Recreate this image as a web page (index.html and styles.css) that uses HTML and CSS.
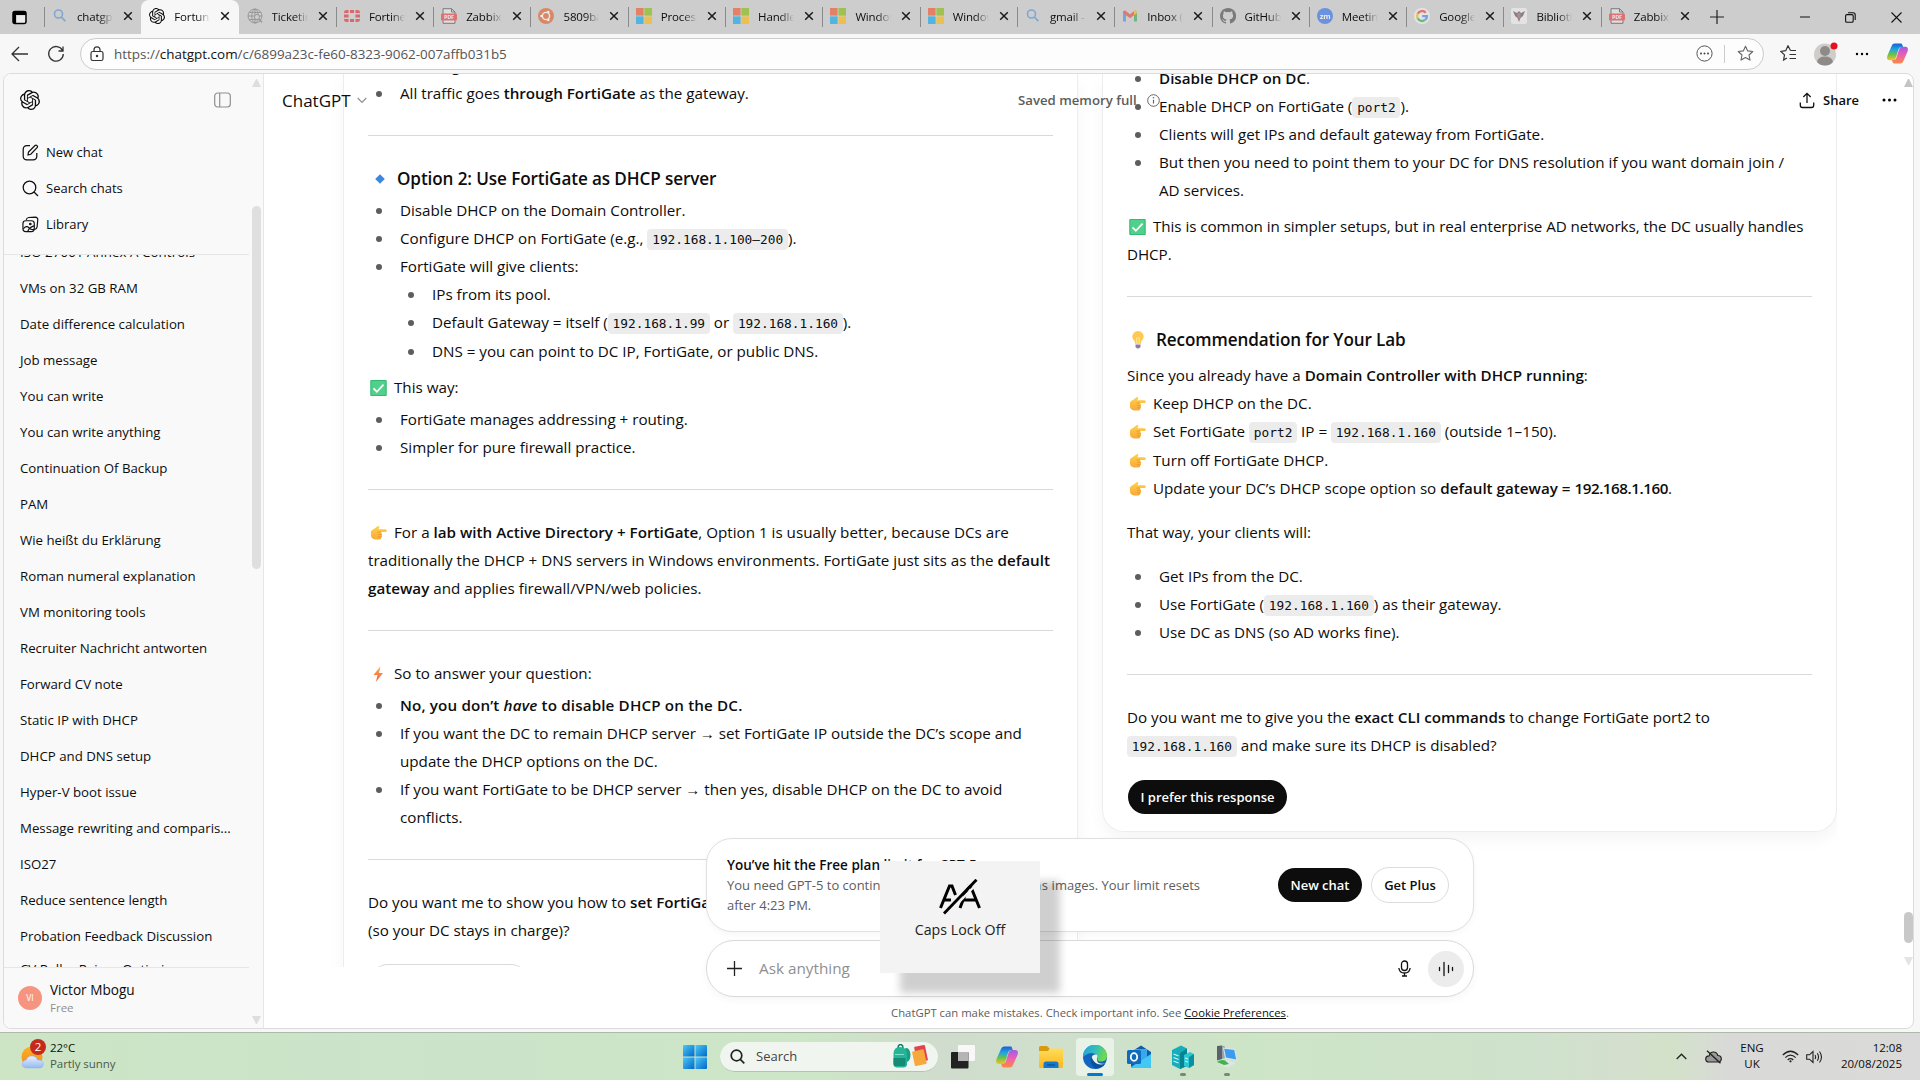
FILE: index.html
```html
<!DOCTYPE html>
<html lang="en">
<head>
<meta charset="utf-8">
<title>ChatGPT</title>
<link rel="stylesheet" href="styles.css">
</head>
<body>
<svg class="defs" width="0" height="0">
  <defs>
    <linearGradient id="gHand" x1="0" y1="0" x2="0" y2="1"><stop offset="0" stop-color="#ffd24a"/><stop offset="1" stop-color="#f9a83a"/></linearGradient>
    <linearGradient id="gBolt" x1="0" y1="0" x2="0" y2="1"><stop offset="0" stop-color="#ffb347"/><stop offset="1" stop-color="#f4553f"/></linearGradient>
    <linearGradient id="gCopA" x1="0" y1="0" x2="0" y2="1"><stop offset="0" stop-color="#1b5fd0"/><stop offset=".35" stop-color="#1ba5e6"/><stop offset=".65" stop-color="#6cc04a"/><stop offset="1" stop-color="#f3c623"/></linearGradient>
    <linearGradient id="gCopB" x1="0" y1="0" x2="0" y2="1"><stop offset="0" stop-color="#a05be8"/><stop offset=".5" stop-color="#ef5fb0"/><stop offset="1" stop-color="#fb8b3c"/></linearGradient>
    <linearGradient id="gWin" x1="0" y1="0" x2="1" y2="1"><stop offset="0" stop-color="#4cc9f7"/><stop offset="1" stop-color="#0067c8"/></linearGradient>
    <linearGradient id="gFold" x1="0" y1="0" x2="0" y2="1"><stop offset="0" stop-color="#ffdc59"/><stop offset="1" stop-color="#fbb81f"/></linearGradient>
    <linearGradient id="gEdge" x1="0" y1="0" x2="1" y2=".3"><stop offset="0" stop-color="#1f9fe4"/><stop offset=".6" stop-color="#35c1b5"/><stop offset="1" stop-color="#6fd94b"/></linearGradient>
    <linearGradient id="gSun" x1="0" y1="0" x2="0" y2="1"><stop offset="0" stop-color="#fdb022"/><stop offset="1" stop-color="#f08a1d"/></linearGradient>
    <linearGradient id="gCloud" x1="0" y1="0" x2="0" y2="1"><stop offset="0" stop-color="#e9f0fb"/><stop offset="1" stop-color="#95b9f3"/></linearGradient>
    <symbol id="x" viewBox="0 0 10 10"><path d="M1.2 1.2l7.6 7.6M8.8 1.2L1.2 8.8" stroke="#1a1a1a" stroke-width="1.5" fill="none"/></symbol>
    <symbol id="knot" viewBox="0 0 24 24"><path fill="currentColor" d="M22.28 9.82a5.98 5.98 0 0 0-.52-4.91 6.05 6.05 0 0 0-6.51-2.9A6.07 6.07 0 0 0 4.98 4.18a5.98 5.98 0 0 0-4 2.9 6.05 6.05 0 0 0 .74 7.1 5.98 5.98 0 0 0 .51 4.91 6.05 6.05 0 0 0 6.51 2.9A5.98 5.98 0 0 0 13.26 24a6.06 6.06 0 0 0 5.77-4.21 5.99 5.99 0 0 0 4-2.9 6.06 6.06 0 0 0-.75-7.07zm-9.02 12.61a4.48 4.48 0 0 1-2.88-1.04l.14-.08 4.78-2.76a.79.79 0 0 0 .39-.68v-6.74l2.02 1.17a.07.07 0 0 1 .04.05v5.58a4.5 4.5 0 0 1-4.49 4.5zM3.6 18.3a4.47 4.47 0 0 1-.54-3.01l.14.09 4.78 2.76a.77.77 0 0 0 .78 0l5.84-3.37v2.33a.08.08 0 0 1-.03.06L9.74 19.95a4.5 4.5 0 0 1-6.14-1.65zM2.34 7.9a4.49 4.49 0 0 1 2.37-1.98v5.68a.77.77 0 0 0 .39.68l5.81 3.35-2.02 1.17a.08.08 0 0 1-.07 0l-4.83-2.79A4.5 4.5 0 0 1 2.34 7.87zm16.6 3.86L13.1 8.36l2.02-1.16a.08.08 0 0 1 .07 0l4.83 2.79a4.49 4.49 0 0 1-.68 8.1v-5.68a.79.79 0 0 0-.4-.66zm2.01-3.02l-.14-.09-4.77-2.78a.78.78 0 0 0-.79 0L9.41 9.23V6.9a.07.07 0 0 1 .03-.06l4.83-2.79a4.5 4.5 0 0 1 6.68 4.66zM8.31 12.86l-2.02-1.16a.08.08 0 0 1-.04-.06V6.07a4.5 4.5 0 0 1 7.38-3.45l-.14.08-4.78 2.76a.79.79 0 0 0-.39.68zm1.1-2.36L12 9l2.6 1.5v3L12 15l-2.6-1.5z"/></symbol>
    <symbol id="mag" viewBox="0 0 16 16"><circle cx="6.5" cy="6" r="4" fill="none" stroke="#4a90d0" stroke-width="1.6"/><path d="M9.3 9l4 4.2" stroke="#4a90d0" stroke-width="1.8"/></symbol>
    <symbol id="globe" viewBox="0 0 16 16"><g fill="none" stroke="#777"><circle cx="8" cy="8" r="7"/><ellipse cx="8" cy="8" rx="3.2" ry="7"/><path d="M1 8h14M2 4.5h12M2 11.5h12M8 1v14"/></g><circle cx="10" cy="9" r="2.6" fill="#cdcdcd" stroke="#777"/><path d="M12 11l3 3.6" stroke="#777" stroke-width="1.5"/></symbol>
    <symbol id="forti" viewBox="0 0 16 16"><path fill="#e5252a" d="M6 2h4v3H6zM6 11h4v3H6zM0 6.5h4.5v3H0zM11.5 6.5H16v3h-4.500zM4.500 2v3H0q0-3 2.500-3zM11.500 2v3H16q0-3-2.500-3zM4.500 14v-3H0q0 3 2.500 3zM11.500 14v-3H16q0 3-2.500 3z"/></symbol>
    <symbol id="pdf" viewBox="0 0 16 16"><path d="M2 .7h8.500L14 4v11.300H2z" fill="#e9e9e9" stroke="#444"/><path d="M10.500.7V4H14" fill="none" stroke="#444"/><rect x="0" y="5.500" width="16" height="7" rx="1" fill="#e5393c"/><text x="8" y="11" font-family="Open Sans" font-weight="700" font-size="5.400" fill="#fff" text-anchor="middle">PDF</text></symbol>
    <symbol id="ubuntu" viewBox="0 0 16 16"><circle cx="8" cy="8" r="8" fill="#e25b25"/><circle cx="8" cy="8" r="3.600" fill="none" stroke="#fff" stroke-width="1.400"/><circle cx="3.500" cy="8" r="1.300" fill="#fff"/><circle cx="10.300" cy="4" r="1.300" fill="#fff"/><circle cx="10.300" cy="12" r="1.300" fill="#fff"/></symbol>
    <symbol id="ms" viewBox="0 0 16 16"><path fill="#f25022" d="M0 0h7.600v7.600H0z"/><path fill="#7fba00" d="M8.400 0H16v7.600H8.400z"/><path fill="#00a4ef" d="M0 8.400h7.600V16H0z"/><path fill="#ffb900" d="M8.400 8.400H16V16H8.400z"/></symbol>
    <symbol id="gmail" viewBox="0 0 16 16"><path fill="#4285f4" d="M1 4v9.500h3V7z"/><path fill="#34a853" d="M15 4v9.500h-3V7z"/><path fill="#ea4335" d="M1 3.500q1-1.500 2.500-.8L8 6.200l4.500-3.500q1.500-.7 2.500.8V5L8 10.300 1 5z"/><path fill="#fbbc04" d="M12 3v4.300L15 5V3.500q-1-1.500-3-.5z"/></symbol>
    <symbol id="github" viewBox="0 0 16 16"><path fill="#444" d="M8 0C3.580 0 0 3.580 0 8c0 3.540 2.290 6.530 5.470 7.590.4.070.55-.17.55-.38v-1.340c-2.230.480-2.700-1.070-2.700-1.070-.360-.920-.890-1.170-.890-1.170-.730-.500.050-.490.050-.490.800.060 1.230.830 1.230.830.720 1.220 1.870.870 2.330.660.070-.520.280-.870.510-1.070-1.780-.200-3.640-.890-3.640-3.950 0-.870.310-1.590.820-2.150-.080-.200-.360-1.020.080-2.120 0 0 .670-.210 2.200.820a7.600 7.600 0 0 1 4 0c1.530-1.040 2.200-.820 2.200-.820.440 1.100.160 1.920.080 2.120.510.560.820 1.270.820 2.150 0 3.070-1.870 3.750-3.650 3.950.290.250.540.730.540 1.480v2.200c0 .210.150.460.550.380A8 8 0 0 0 8 0z"/></symbol>
    <symbol id="zoomf" viewBox="0 0 16 16"><circle cx="8" cy="8" r="8" fill="#2b6bea"/><text x="8" y="10.600" font-family="Open Sans" font-weight="700" font-size="7.500" fill="#fff" text-anchor="middle">zm</text></symbol>
    <symbol id="google" viewBox="0 0 16 16"><circle cx="8" cy="8" r="8" fill="#f4f4f4"/><g fill="none" stroke-width="2.300"><path d="M11.800 4.700A5 5 0 0 0 3.600 5.800" stroke="#ea4335"/><path d="M3.600 5.800a5 5 0 0 0 0 4.500" stroke="#fbbc04"/><path d="M3.600 10.300a5 5 0 0 0 7.500 1.600" stroke="#34a853"/><path d="M11.100 11.900A5 5 0 0 0 13 8.100H8.200" stroke="#4285f4"/></g></symbol>
    <symbol id="biblio" viewBox="0 0 16 16"><rect width="16" height="16" rx="2" fill="#f2f2f2"/><path d="M2 3l4 2 2-2 2 2 4-2-2 5-2.500 2L8 14l-1.500-4L4 8z" fill="#555"/><path d="M6.500 5h3v4L8 11 6.500 9z" fill="#b55"/></symbol>
    <symbol id="hand" viewBox="0 0 18 16"><path fill="url(#gHand)" d="M1 6.500q1-2 3.500-3L8 .8q1.800-.6 1.900.9L9 4h7.300q1.500.2 1.500 1.500T16.300 7H11.500q1.200.6.900 1.900 1 .9.200 2.100.600 1.300-.6 2 0 1.800-2 2H5.500Q1.500 14.500 1 11z"/><path d="M8 7h3.500M8.500 9.500h3.500M8.500 12h3" stroke="#e08a20" stroke-width=".7" fill="none"/></symbol>
    <symbol id="check" viewBox="0 0 16 16"><rect width="16" height="16" rx="1" fill="#4fd18b"/><path d="M.4.500h15.200v15H.4z" fill="none" stroke="#2fb56f" stroke-width=".9"/><path d="M3 8.300l3.400 3.500L13 4.700" fill="none" stroke="#fff" stroke-width="1.700"/></symbol>
    <symbol id="cop" viewBox="0 0 24 24"><path fill="url(#gCopA)" d="M15.500 1.500H9Q6.800 1.500 6 4L1.500 14Q0 19 4 19h3.500q2 0 2.800-2.500l3-9.500q.7-1.700 2.500-1.700h2L17 2.800q-.4-1.300-1.500-1.300z"/><path fill="url(#gCopB)" d="M8.500 22.500H15q2.200 0 3-2.500l4.500-10Q24 5 20 5h-3.500q-2 0-2.800 2.500l-3 9.500Q10 18.700 8.200 18.700h-2L7 21.200q.4 1.300 1.500 1.300z"/></symbol>
  </defs>
</svg>

<div class="tabstrip">
  <div class="tabmenu"><svg width="15" height="15" viewBox="0 0 15 15"><rect x="1" y="1.500" width="13" height="12" rx="2" fill="none" stroke="#000" stroke-width="1.500"/><path d="M1 2.500q0-1.500 2-1.500h9q2 0 2 1.500V5H1zM1 5h3v8.500H3q-2 0-2-2z" fill="#000"/><path d="M5 5.500h8v7H5z" fill="#fff" opacity=".6"/></svg></div>
  <div class="tab"><svg class="fav"><use href="#mag"/></svg><span>chatgpt</span><svg class="close"><use href="#x"/></svg></div>
  <div class="tab active"><svg class="fav"><use href="#knot"/></svg><span>Fortune</span><svg class="close"><use href="#x"/></svg></div>
  <div class="tab"><svg class="fav"><use href="#globe"/></svg><span>Ticketing</span><svg class="close"><use href="#x"/></svg></div>
  <div class="tab"><svg class="fav"><use href="#forti"/></svg><span>Fortinet</span><svg class="close"><use href="#x"/></svg></div>
  <div class="tab"><svg class="fav"><use href="#pdf"/></svg><span>Zabbix_</span><svg class="close"><use href="#x"/></svg></div>
  <div class="tab"><svg class="fav"><use href="#ubuntu"/></svg><span>5809ba</span><svg class="close"><use href="#x"/></svg></div>
  <div class="tab"><svg class="fav"><use href="#ms"/></svg><span>Process</span><svg class="close"><use href="#x"/></svg></div>
  <div class="tab"><svg class="fav"><use href="#ms"/></svg><span>Handle</span><svg class="close"><use href="#x"/></svg></div>
  <div class="tab"><svg class="fav"><use href="#ms"/></svg><span>Window</span><svg class="close"><use href="#x"/></svg></div>
  <div class="tab"><svg class="fav"><use href="#ms"/></svg><span>Window</span><svg class="close"><use href="#x"/></svg></div>
  <div class="tab"><svg class="fav"><use href="#mag"/></svg><span>gmail -</span><svg class="close"><use href="#x"/></svg></div>
  <div class="tab"><svg class="fav"><use href="#gmail"/></svg><span>Inbox (</span><svg class="close"><use href="#x"/></svg></div>
  <div class="tab"><svg class="fav"><use href="#github"/></svg><span>GitHub</span><svg class="close"><use href="#x"/></svg></div>
  <div class="tab"><svg class="fav"><use href="#zoomf"/></svg><span>Meeting</span><svg class="close"><use href="#x"/></svg></div>
  <div class="tab"><svg class="fav"><use href="#google"/></svg><span>Google</span><svg class="close"><use href="#x"/></svg></div>
  <div class="tab"><svg class="fav"><use href="#biblio"/></svg><span>Biblioth</span><svg class="close"><use href="#x"/></svg></div>
  <div class="tab"><svg class="fav"><use href="#pdf"/></svg><span>Zabbix_</span><svg class="close"><use href="#x"/></svg></div>
  <svg class="plus" width="14" height="14" viewBox="0 0 14 14"><path d="M7 0v14M0 7h14" stroke="#222" stroke-width="1.200"/></svg>
  <div class="winbtns">
    <svg width="10" height="10" viewBox="0 0 10 10"><path d="M0 5h10" stroke="#111"/></svg>
    <svg width="11" height="11" viewBox="0 0 11 11" fill="none" stroke="#111" stroke-width="1.100"><rect x=".6" y="2.600" width="7.600" height="7.600" rx="1.300"/><path d="M3 .7h5q2.200 0 2.200 2.200V8"/></svg>
    <svg width="11" height="11" viewBox="0 0 11 11"><path d="M.5.500l10 10M10.500.500l-10 10" stroke="#111" stroke-width="1.100"/></svg>
  </div>
</div>

<div class="toolbar">
  <svg class="back" width="18" height="16" viewBox="0 0 18 16"><path d="M8 1L1 8l7 7M1 8h16" fill="none" stroke="#333" stroke-width="1.300"/></svg>
  <svg class="reload" width="18" height="18" viewBox="0 0 18 18"><path d="M15.500 5.500A7.300 7.300 0 1 0 16.300 9M16 1.500v4.500h-4.500" fill="none" stroke="#333" stroke-width="1.300"/></svg>
  <div class="address">
    <svg width="14" height="16" viewBox="0 0 14 16"><rect x="1" y="5.500" width="12" height="9" rx="1.800" fill="none" stroke="#333" stroke-width="1.200"/><path d="M4 5.500V3.800a3 3 0 0 1 6 0v1.700" fill="none" stroke="#333" stroke-width="1.200"/><circle cx="7" cy="10" r="1.200" fill="#333"/></svg>
    <span class="url">https://<b>chatgpt.com</b>/c/6899a23c-fe60-8323-9062-007affb031b5</span>
    <svg width="17" height="17" viewBox="0 0 17 17"><circle cx="8.500" cy="8.500" r="7.600" fill="none" stroke="#555"/><g fill="#444"><circle cx="5" cy="8.500" r="1"/><circle cx="8.500" cy="8.500" r="1"/><circle cx="12" cy="8.500" r="1"/></g></svg>
    <i class="adiv"></i>
    <svg width="17" height="17" viewBox="0 0 17 17"><path d="M8.500 1.200l2.200 4.700 5.100.6-3.800 3.500 1 5.100-4.500-2.500L4 15.100 5 10 1.200 6.500l5.100-.6z" fill="none" stroke="#666" stroke-width="1.100" stroke-linejoin="round"/></svg>
  </div>
  <div class="tools">
    <svg width="17" height="17" viewBox="0 0 17 17" fill="none" stroke="#333" stroke-width="1.200"><path d="M10.500 5.500L8 .8 5.700 5.700.8 6.400l3.700 3.500-.9 5.100 3.300-1.900M10.500 5.500H16M9.500 9.500H16M9.500 13.500H16"/></svg>
    <svg width="24" height="24" viewBox="0 0 24 24"><circle cx="11" cy="12.500" r="11" fill="#cfccc9"/><circle cx="11" cy="9" r="5" fill="#8e8a87"/><path d="M3 20q1-5.500 8-5.500t8 5.500q-3 3.500-8 3.500T3 20z" fill="#8e8a87"/><circle cx="20" cy="4" r="3.500" fill="#e8101c"/></svg>
    <svg width="14" height="4" viewBox="0 0 14 4"><circle cx="2" cy="2" r="1.200"/><circle cx="7" cy="2" r="1.200"/><circle cx="12" cy="2" r="1.200"/></svg>
    <svg width="23" height="23"><use href="#cop"/></svg>
  </div>
</div>

<div class="window">
  <aside class="sidebar">
    <div class="sidemain">
      <div class="sidehead"><svg class="logo" width="20" height="20"><use href="#knot"/></svg><svg width="17" height="16" viewBox="0 0 17 16"><rect x=".7" y="1" width="15.600" height="14" rx="3" fill="none" stroke="#8f8f8f" stroke-width="1.200"/><path d="M5.700 1v14" stroke="#8f8f8f" stroke-width="1.200"/></svg></div>
      <nav>
        <div><svg width="17" height="17" viewBox="0 0 17 17" fill="none" stroke="#111" stroke-width="1.250"><path d="M8 1.700H5Q1.200 1.700 1.200 5.500V12q0 3.800 3.800 3.800h6q3.800 0 3.800-3.800V9"/><path d="M6 11l.5-3L13 1.500q1-.8 2 .1t.1 2L8.800 10.300z"/></svg>New chat</div>
        <div><svg width="17" height="17" viewBox="0 0 17 17" fill="none" stroke="#111" stroke-width="1.300"><circle cx="7.500" cy="7.500" r="6.300"/><path d="M12 12l4 4"/></svg>Search chats</div>
        <div><svg width="17" height="17" viewBox="0 0 18 17" fill="none" stroke="#111" stroke-width="1.250"><path d="M4.500 3.500q.5-2 2.500-2.400l7-.4q2.700.2 2.700 2.700L16 11q-.5 2.500-2.500 2.700"/><rect x="1" y="4.500" width="12" height="11.500" rx="3"/><path d="M1.500 13q3-4 6-1t5.500 1.500M6 16q2-5 7-6"/><circle cx="8.800" cy="8" r=".8"/></svg>Library</div>
      </nav>
      <ul class="history">
        <li>ISO 27001 Annex A Controls</li><li>VMs on 32 GB RAM</li><li>Date difference calculation</li><li>Job message</li><li>You can write</li><li>You can write anything</li><li>Continuation Of Backup</li><li>PAM</li><li>Wie heißt du Erklärung</li><li>Roman numeral explanation</li><li>VM monitoring tools</li><li>Recruiter Nachricht antworten</li><li>Forward CV note</li><li>Static IP with DHCP</li><li>DHCP and DNS setup</li><li>Hyper-V boot issue</li><li>Message rewriting and comparis...</li><li>ISO27</li><li>Reduce sentence length</li><li>Probation Feedback Discussion</li><li>CV Roller Rainer Optimierung</li>
      </ul>
      <div class="account"><span class="ava">VI</span><div><p>Victor Mbogu</p><small>Free</small></div></div>
    </div>
    <div class="sbar"><i class="up"></i><i class="thumb"></i><i class="down"></i></div>
  </aside>

  <main>
    <div class="cards">
      <section class="card left">
        <ul><li>Clients get IPs from the DC.</li><li>All traffic goes <b>through FortiGate</b> as the gateway.</li></ul>
        <hr>
        <h3><svg class="dia" viewBox="0 0 10 10"><path d="M5 .2L9.800 5 5 9.800.2 5z" fill="#3f86e0"/></svg>Option 2: Use FortiGate as DHCP server</h3>
        <ul class="tight first">
          <li>Disable DHCP on the Domain Controller.</li>
          <li>Configure DHCP on FortiGate (e.g., <code>192.168.1.100–200</code>).</li>
          <li>FortiGate will give clients:
            <ul><li>IPs from its pool.</li><li class="tall">Default Gateway = itself (<code>192.168.1.99</code> or <code>192.168.1.160</code>).</li><li>DNS = you can point to DC IP, FortiGate, or public DNS.</li></ul>
          </li>
        </ul>
        <p class="mt8"><svg class="em"><use href="#check"/></svg>This way:</p>
        <ul class="tight"><li>FortiGate manages addressing + routing.</li><li>Simpler for pure firewall practice.</li></ul>
        <hr>
        <p><svg class="em"><use href="#hand"/></svg>For a <b>lab with Active Directory + FortiGate</b>, Option 1 is usually better, because DCs are<br>traditionally the DHCP + DNS servers in Windows environments. FortiGate just sits as the <b>default<br>gateway</b> and applies firewall/VPN/web policies.</p>
        <hr>
        <p><svg class="em" viewBox="0 0 17 16"><path fill="url(#gBolt)" d="M10.500.300L3.500 9h4L6 15.800 13 7H9z"/></svg>So to answer your question:</p>
        <ul class="tight">
          <li class="loose"><b>No, you don’t <em>have</em> to disable DHCP on the DC.</b></li>
          <li>If you want the DC to remain DHCP server <span class="arr">→</span> set FortiGate IP outside the DC’s scope and<br>update the DHCP options on the DC.</li>
          <li>If you want FortiGate to be DHCP server <span class="arr">→</span> then yes, disable DHCP on the DC to avoid<br>conflicts.</li>
        </ul>
        <hr>
        <p>Do you want me to show you how to <b>set FortiGate</b><br>(so your DC stays in charge)?</p>
        <div class="ghostbtn"></div>
      </section>
      <section class="card right">
        <ul>
          <li><b>Disable DHCP on DC</b>.</li>
          <li>Enable DHCP on FortiGate (<code>port2</code>).</li>
          <li>Clients will get IPs and default gateway from FortiGate.</li>
          <li>But then you need to point them to your DC for DNS resolution if you want domain join /<br>AD services.</li>
        </ul>
        <p class="mt8 snug"><svg class="em"><use href="#check"/></svg>This is common in simpler setups, but in real enterprise AD networks, the DC usually handles<br>DHCP.</p>
        <hr>
        <h3><svg class="bulb" viewBox="0 0 12 18"><path fill="#ffc94d" d="M6 0a5.700 5.700 0 0 1 5.700 5.700Q11.700 8 9.500 10L8.700 13H3.300L2.500 10Q.3 8 .3 5.700A5.700 5.700 0 0 1 6 0z"/><path d="M5 13L4.500 7h3L7 13" fill="none" stroke="#fff0b0" stroke-width=".8"/><path d="M3.500 13.500h5v2.500q-2.500 3-5 0z" fill="#8d7d9c"/></svg>Recommendation for Your Lab</h3>
        <p class="mt7">Since you already have a <b>Domain Controller with DHCP running</b>:<br><svg class="em"><use href="#hand"/></svg>Keep DHCP on the DC.</p>
        <p class="tall"><svg class="em"><use href="#hand"/></svg>Set FortiGate <code>port2</code> IP = <code>192.168.1.160</code> (outside 1–150).</p>
        <p><svg class="em"><use href="#hand"/></svg>Turn off FortiGate DHCP.<br><svg class="em"><use href="#hand"/></svg>Update your DC’s DHCP scope option so <b>default gateway = <span class="ip">192.168.1.160</span></b>.</p>
        <p class="mt16">That way, your clients will:</p>
        <ul class="mt16"><li>Get IPs from the DC.</li><li>Use FortiGate (<code>192.168.1.160</code>) as their gateway.</li><li>Use DC as DNS (so AD works fine).</li></ul>
        <hr>
        <p>Do you want me to give you the <b>exact CLI commands</b> to change FortiGate port2 to<br><code>192.168.1.160</code> and make sure its DHCP is disabled?</p>
        <button class="prefer">I prefer this response</button>
      </section>
    </div>

    <header class="chathead">
      <span class="model">ChatGPT</span><svg class="chev" width="10" height="7" viewBox="0 0 10 7"><path d="M.7 1L5 5.500 9.300 1" fill="none" stroke="#8f8f8f" stroke-width="1.200"/></svg>
      <span class="memory">Saved memory full</span><svg width="13" height="13" viewBox="0 0 13 13"><circle cx="6.500" cy="6.500" r="5.800" fill="none" stroke="#666"/><path d="M6.500 5.700v3.800" stroke="#666" stroke-width="1.200"/><circle cx="6.500" cy="3.800" r=".8" fill="#666"/></svg>
      <svg class="shareicon" width="16" height="17" viewBox="0 0 16 17" fill="none" stroke="#111" stroke-width="1.300"><path d="M8 11V1.500M4.300 5L8 1.300 11.700 5M1.300 10.500v2.800q0 2.200 2.200 2.200h9q2.200 0 2.200-2.200v-2.800"/></svg><span class="share">Share</span>
      <svg width="15" height="4" viewBox="0 0 15 4"><circle cx="2" cy="2" r="1.500"/><circle cx="7.500" cy="2" r="1.500"/><circle cx="13" cy="2" r="1.500"/></svg>
    </header>
    <div class="mbar"><i class="up"></i><i class="mthumb"></i><i class="down"></i></div>

    <div class="bottom">
      <div class="banner">
        <div class="bmsg"><b>You’ve hit the Free plan limit for GPT-5.</b><br>You need GPT-5 to continue <span>this chat because it has</span> images. Your limit resets<br>after 4:23 PM.</div>
        <button class="dark">New chat</button><button class="light">Get Plus</button>
      </div>
      <div class="composer">
        <svg width="15" height="15" viewBox="0 0 15 15"><path d="M7.500 0v15M0 7.500h15" stroke="#222" stroke-width="1.300"/></svg>
        <span>Ask anything</span>
        <svg width="13" height="17" viewBox="0 0 13 17" fill="none" stroke="#111" stroke-width="1.300"><rect x="3.500" y="1" width="6" height="9.500" rx="3"/><path d="M.9 8q.4 5 5.600 5t5.600-5M6.500 13v3M4 16h5"/></svg>
        <i class="voice"><svg width="16" height="16" viewBox="0 0 16 16"><path d="M1.500 6.500v3M6 1.500v13M10.500 4.500v7M14.500 6.500v3" stroke="#111" stroke-width="1.300" stroke-linecap="round"/></svg></i>
      </div>
      <p class="note">ChatGPT can make mistakes. Check important info. See <u>Cookie Preferences</u>.</p>
    </div>
  </main>
</div>

<footer class="taskbar">
  <div class="weather">
    <svg width="28" height="32" viewBox="0 0 28 32"><circle cx="12" cy="18" r="10.500" fill="url(#gSun)"/><path d="M6 29q-4-.5-3.800-4T6 21q2-4.500 6.500-4t5 4q5.500-.5 6 4-.2 4-4 4z" fill="url(#gCloud)" stroke="#8fb0e8" stroke-width=".5"/><circle cx="18" cy="8" r="8" fill="#c42b1c"/><text x="18" y="12" font-family="Open Sans" font-size="11.500" fill="#fff" text-anchor="middle">2</text></svg>
    <div><p>22°C</p><p class="dim">Partly sunny</p></div>
  </div>
  <div class="center">
    <svg width="24" height="24" viewBox="0 0 24 24"><g fill="url(#gWin)"><path d="M0 1q0-1 1-1h10.500v11.500H0z"/><path d="M12.500 0H23q1 0 1 1v10.500H12.500z"/><path d="M0 12.500h11.500V24H1q-1 0-1-1z"/><path d="M12.500 12.500H24V23q0 1-1 1H12.500z"/></g></svg>
    <div class="search"><svg width="15" height="15" viewBox="0 0 15 15" fill="none" stroke="#222" stroke-width="1.700"><circle cx="6.500" cy="6.500" r="5.300"/><path d="M10.300 10.300l4 4"/></svg><span>Search</span>
      <svg width="36" height="24" viewBox="0 0 36 24"><path d="M6 4q0-3.500 2.500-3.500T11 4" fill="none" stroke="#0f7d68" stroke-width="1.500"/><ellipse cx="14.500" cy="11" rx="4" ry="7" fill="#1b9e86"/><path d="M1.500 10Q1.500 3 8 3t7 7v11q-.5 2-3 2.500H4.500Q1.500 23 1.500 20z" fill="#25b497"/><path d="M1.500 14h12v6q0 2-2 2h-8q-2 0-2-2z" fill="#158a74"/><path d="M3 10.500h9" stroke="#7fe3cd" stroke-width="1"/><g transform="rotate(-12 28 12)"><rect x="24" y="2" width="11" height="16" rx="1" fill="#e0454c"/><rect x="21" y="6" width="12" height="15" rx="1" fill="#f7a83c"/></g></svg>
    </div>
    <svg width="24" height="24" viewBox="0 0 24 24"><rect x="7" width="17" height="16" rx="1" fill="#f8f8f8"/><rect y="7" width="17.500" height="16.500" rx="1" fill="#222"/><path d="M7 7h10.500v9H7z" fill="#b5b5b5"/></svg>
    <svg width="24" height="24"><use href="#cop"/></svg>
    <svg width="24" height="24" viewBox="0 0 24 24"><path d="M0 2.500Q0 1 1.500 1H8l2.500 2.500V8H0z" fill="#d99a12"/><path d="M0 6h9l2-2.500h11.500q1.500 0 1.500 1.500v16.500q0 1.500-1.500 1.500h-21Q0 23 0 21.500z" fill="url(#gFold)"/><path d="M4.500 23v-4q0-2.500 2.500-2.500h10q2.500 0 2.500 2.500v4z" fill="#1478cf"/><path d="M8 20h8" stroke="#0b4f96" stroke-width="1.300"/></svg>
    <div class="edgebox"><svg width="24" height="24" viewBox="0 0 24 24"><circle cx="12" cy="12" r="12" fill="#1266c0"/><path d="M0 12A12 12 0 0 1 24 11q0 5-5.500 5.500-5 0-4-2.500 1-2.500-1-4.500Q10 7 5.500 8.500 1.500 10 0 12z" fill="url(#gEdge)"/><path d="M13.500 9.500q-4.500-.5-5 4 .5 6.500 8 7.500 3 0 5.500-2.500-7 1-8-3-.5-1.500.5-3 .5-2-1-3z" fill="#e9f2e6"/><path d="M8.500 11.500Q6 19 12.500 23.700q7 0 10-5.400-4.500 2.500-9 .2-3.500-2-5-7z" fill="#0b4fa0"/></svg><i></i></div>
    <svg width="24" height="24" viewBox="0 0 24 24"><path d="M4 7L14 .5 24 7v14q0 2-2 2H6q-2 0-2-2z" fill="#0f5cab"/><path d="M8 4h12v11H8z" fill="#39a7ea"/><path d="M4 22L24 9v12q0 2-2 2H6z" fill="#43c7f4"/><rect y="5" width="14" height="14" rx="1.500" fill="#0f6cbd"/><ellipse cx="7" cy="12" rx="3.200" ry="3.800" fill="none" stroke="#fff" stroke-width="1.800"/></svg>
    <div class="app"><svg width="24" height="24" viewBox="0 0 24 24"><path d="M1 5l9-4.500 6 3V21l-7 3-8-4z" fill="#17aebb"/><path d="M9 8l7-4.500V21l-7 3z" fill="#078493"/><path d="M13 10l6-3 4 2v11l-5 3-5-2z" fill="#2cc7d3"/><path d="M18 12l5-3v11l-5 3z" fill="#0692a2"/><path d="M2.500 9l5 2M2.500 12.500l5 2M2.500 16l5 2M14 13l3 1M14 16l3 1" stroke="#c9f6fa" stroke-width="1.200"/></svg><i></i></div>
    <div class="app"><svg width="24" height="24" viewBox="0 0 24 24"><path d="M2 1l5-.5V14l-5 1.500z" fill="#59636b"/><path d="M7 .5l3 1V13l-3 1z" fill="#98a3aa"/><path d="M8 2.500L20 4l2.500 12L10 13.500z" fill="#d9e6ef"/><path d="M9.200 3.800l10 1.300 2 9.300-10.200-2z" fill="#3a9bf0"/><path d="M3 18l9-3 9 3-9 5z" fill="#dfe4e4"/><path d="M2 17q4-3 8-1.500l4 3.500-5 1z" fill="#3fb34c"/></svg><i></i></div>
  </div>
  <div class="tray">
    <svg width="11" height="7" viewBox="0 0 11 7"><path d="M.7 6L5.500 1.200 10.300 6" fill="none" stroke="#222" stroke-width="1.300"/></svg>
    <svg width="17" height="14" viewBox="0 0 17 14"><path d="M4 12Q.7 12 .7 9t3.500-3.200Q5 2 8.500 2t4.300 3.500q3.500.2 3.500 3.300T13 12z" fill="#999" stroke="#222" stroke-width="1.200"/><path d="M2 .7l13.500 12.600" stroke="#222" stroke-width="1.400"/></svg>
    <div class="lang"><p>ENG</p><p>UK</p></div>
    <svg width="17" height="13" viewBox="0 0 17 13" fill="none" stroke="#222" stroke-width="1.200"><path d="M.8 5Q8.500-2.500 16.200 5M3.300 7.600q5.200-4.900 10.400 0M5.700 10q2.800-2.600 5.600 0"/><circle cx="8.500" cy="11.300" r="1.100" fill="#222" stroke="none"/></svg>
    <svg width="17" height="14" viewBox="0 0 17 14" fill="none" stroke="#222" stroke-width="1.100"><path d="M.7 4.800h2.800L7 1.500v11L3.500 9.200H.7zM9 5q1.300 2 0 4M11.300 3.300q2.500 3.700 0 7.400M13.500 1.500q4 5.500 0 11"/></svg>
    <div class="clock"><p>12:08</p><p>20/08/2025</p></div>
  </div>
</footer>

<div class="caps"><svg width="42" height="36" viewBox="0 0 42 36"><path d="M1.500 29L10.500 7h2.500l3.500 9M5 21h7M40.500 29L31.500 7h-2l-8.500 22M25 21h12" fill="none" stroke="#000" stroke-width="3"/><path d="M35 0L2.500 33.500" stroke="#f3f3f3" stroke-width="2"/><path d="M39.500 3L9 34.500" stroke="#f3f3f3" stroke-width="2.500"/><path d="M37.500.7L5 34.500" stroke="#000" stroke-width="2.800"/></svg><span>Caps Lock Off</span></div>
</body>
</html>
```

FILE: styles.css
```css
* { box-sizing: border-box; }
body { margin: 0; width: 1920px; height: 1080px; overflow: hidden; background: #f7f7f7; font-family: "Open Sans", "Noto Sans", sans-serif; color: #0d0d0d; display: flex; flex-direction: column; }
p, h3, ul { margin: 0; padding: 0; }
ul { list-style: none; }
svg { flex: none; display: block; }
button { font: inherit; margin: 0; border: 0; padding: 0; }
.defs { position: absolute; }

.tabstrip { height: 34px; flex: none; background: #cdcdcd; display: flex; align-items: center; }
.tabmenu { width: 44px; padding-left: 12px; }
.tab { width: 97.3px; height: 34px; flex: none; display: flex; align-items: center; padding-left: 8px; font-size: 11.5px; letter-spacing: -.15px; background: linear-gradient(#8a8a8a, #8a8a8a) 0 50% / 1px 20px no-repeat; padding-bottom: 2px; }
.tab .fav { width: 16px; height: 16px; opacity: .6; }
.tab span { width: 36px; margin: 0 10px 0 9px; overflow: hidden; white-space: nowrap; -webkit-mask: linear-gradient(90deg, #000 62%, transparent); mask: linear-gradient(90deg, #000 62%, transparent); }
.tab .close { width: 10px; height: 10px; }
.tab.active { background: #f7f7f7; border-radius: 8px 8px 0 0; }
.tab.active .fav { opacity: 1; }
.tab.active + .tab { background: none; }
.plus { margin-left: 12px; }
.winbtns { display: flex; align-items: center; gap: 35px; margin-left: 76px; }

.toolbar { height: 39px; flex: none; display: flex; align-items: center; padding-left: 11px; }
.reload { margin-left: 18px; }
.address { margin-left: 15px; width: 1684px; height: 32px; border: 1px solid #cbcbcb; border-radius: 16px; background: #fdfdfd; display: flex; align-items: center; padding: 0 9px; flex: none; }
.url { margin-left: 10px; flex: 1; font-size: 13.45px; color: #555; white-space: nowrap; }
.url b { font-weight: 400; color: #111; }
.adiv { width: 1px; height: 18px; background: #ccc; margin: 0 12px 0 11px; }
.tools { display: flex; align-items: center; margin-left: 16px; gap: 17px; }

.window { margin: 0 6px 0 3px; height: 956px; flex: none; border: 1px solid #dcdcdc; border-radius: 8px; overflow: hidden; display: flex; background: #fff; }
.sidebar { width: 260px; flex: none; background: #f9f9f9; border-right: 1px solid #e6e6e6; display: flex; justify-content: space-between; font-size: 13px; }
.sidemain { width: 245px; display: flex; flex-direction: column; }
.sidehead { display: flex; justify-content: space-between; align-items: center; padding: 0 18px 0 16px; height: 52px; }
.sidebar nav { padding: 8px 0 11px; border-bottom: 1px solid #e6e6e6; height: 129px; }
nav div { height: 36px; display: flex; align-items: center; gap: 7px; padding-left: 18px; }
.history { height: 712px; overflow: hidden; font-size: 13.25px; }
.history li { height: 36px; line-height: 36px; padding-left: 16px; white-space: nowrap; }
.history li:first-child { margin-top: -21px; letter-spacing: .1px; }
.history li:last-child { line-height: 31px; }
.account { border-top: 1px solid #e6e6e6; flex: 1; display: flex; gap: 8px; padding: 11px 14px; }
.account p { font-size: 13.6px; line-height: 20px; margin-top: 1px; }
.account small { display: block; font-size: 11.5px; line-height: 16px; color: #8f8f8f; }
.ava { width: 24px; height: 24px; border-radius: 12px; background: #f79480; color: #fff; font-size: 8.500px; line-height: 24px; text-align: center; margin-top: 7px; }
.sbar, .mbar { width: 9px; margin-right: 2px; display: flex; flex-direction: column; }
.up { border: 4.500px solid transparent; border-top: 0; border-bottom: 8px solid #dedede; margin-top: 5px; }
.down { border: 4.500px solid transparent; border-bottom: 0; border-top: 8px solid #dedede; }
.thumb { height: 363px; background: #dfdfdf; border-radius: 5px; margin-top: 119px; margin-bottom: 447px; }

main { flex: 1; position: relative; display: flex; }
.cards { height: 893px; overflow: hidden; display: flex; align-items: flex-start; gap: 24px; padding-left: 79px; font-size: 15.2px; line-height: 28px; white-space: nowrap; }
.card { width: 735px; border: 1px solid #ededed; border-width: 0 1px; padding: 0 24px; box-shadow: 0 8px 16px rgba(0,0,0,.04); flex: none; }
.left { height: 960px; }
.left > ul:first-child { margin-top: -23px; }
.right { border-bottom-width: 1px; border-radius: 0 0 22px 22px; height: 758px; }
.right > ul:first-child { margin-top: -10px; }
.card li { padding-left: 32px; }
.card li::before { content: ""; display: inline-block; width: 6px; height: 6px; border-radius: 3px; background: #5d5d5d; margin: 0 18px 2px -24px; vertical-align: middle; }
hr { border: 0; height: 1px; background: #d9d9d9; margin: 28px 0; }
h3 { font-size: 17.1px; font-weight: 600; line-height: 28px; letter-spacing: -.1px; padding-top: 1px; }
b { font-weight: 600; }
.tight { margin-top: 4px; }
.tight.first { margin-top: 3px; }
.mt7 { margin-top: 7px; }
.mt8 { margin-top: 8px; }
.mt16 { margin-top: 16px; }
.snug { letter-spacing: -.06px; }
.loose { letter-spacing: .15px; }
.card .tall { height: 29px; }
.em { display: inline-block; width: 17px; height: 16px; margin: 0 7px 0 2px; vertical-align: -3px; }
.dia { display: inline-block; width: 10px; height: 10px; margin: 0 12px 0 7px; vertical-align: 1px; }
.bulb { display: inline-block; width: 12px; height: 18px; margin: 0 12px 0 5px; vertical-align: -3px; }
code { font-family: "DejaVu Sans Mono", "Liberation Mono", monospace; font-size: 12.800px; line-height: 0; letter-spacing: 0; background: #ececec; border-radius: 4px; padding: 3px 4.8px; }
.arr { font-size: 15px; line-height: 0; }
.ip { letter-spacing: -.45px; }
.ghostbtn { margin: 20px 0 0 2px; width: 159px; height: 36px; border: 1px solid #d9d9d9; border-radius: 18px; }
.prefer { display: block; margin-top: 21px; width: 159px; height: 34px; border-radius: 17px; background: #0d0d0d; color: #fff; font-weight: 600; font-size: 13px; margin-left: 1px; }

.chathead { position: absolute; left: 0; right: 12px; top: 0; height: 52px; display: flex; align-items: center; padding-left: 18px; }
.model { font-size: 17px; width: 70px; }
.chev { margin-left: 5px; }
.memory { margin-left: 651px; width: 121px; font-size: 13.2px; font-weight: 600; color: #5d5d5d; margin-right: 8px; white-space: nowrap; }
.shareicon { margin-left: 639px; }
.share { font-size: 13px; font-weight: 600; margin: 0 22px 0 8px; width: 37px; }
.mbar { position: absolute; right: 0; top: 0; height: 893px; margin-right: 0; }
.mbar .up { border-bottom-color: #c4c4c4; }
.mthumb { height: 31px; border-radius: 5px; background: #c8c8c8; margin-top: 825px; margin-bottom: 14px; }
.mbar .down { border-top-color: #e4e4e4; }

.bottom { position: absolute; left: 442px; top: 764px; width: 768px; }
.banner { height: 94px; border: 1px solid #e0e0e0; border-radius: 26px; background: #fff; box-shadow: 0 2px 6px rgba(0,0,0,.04); display: flex; align-items: center; padding: 0 24px 0 20px; }
.bmsg { flex: 1; font-size: 13px; line-height: 20px; color: #5d5d5d; white-space: nowrap; }
.bmsg b { color: #0d0d0d; font-size: 13.5px; line-height: 18px; }
.bmsg span { letter-spacing: .33px; }
.dark, .light { height: 34px; border-radius: 17px; font-size: 13px; font-weight: 600; }
.dark { width: 84px; background: #0d0d0d; color: #fff; margin-right: 9px; }
.light { width: 78px; background: #fff; border: 1px solid #dcdcdc; height: 36px; border-radius: 18px; color: #0d0d0d; }
.composer { margin-top: 8px; height: 57px; border: 1px solid #d9d9d9; border-radius: 28px; background: #fff; box-shadow: 0 3px 8px rgba(0,0,0,.04); display: flex; align-items: center; padding: 0 9px 0 20px; }
.composer span { margin: -2px 0 0 17px; flex: 1; font-size: 15.3px; color: #8f8f8f; }
.voice { width: 36px; height: 36px; border-radius: 18px; background: #ececec; display: grid; place-items: center; margin-left: 17px; }
.note { font-size: 11.300px; text-align: center; color: #5d5d5d; margin-top: 8px; line-height: 16px; white-space: nowrap; }
.note u { color: #0d0d0d; }

.taskbar { margin-top: 3px; height: 48px; flex: none; border-top: 1px solid #aeb8ab; display: flex; align-items: center; background: linear-gradient(90deg, #cde5c5 0, #cbe4ca 20%, #cde6c7 42%, #d0dccd 49%, #cfe0cc 55%, #cde5c7 65%, #cfe2cc 80%, #d4dfce 84%, #d3e1c9 87%, #d9dad8 90%, #d9dad9); font-size: 11.500px; line-height: 16px; }
.weather { width: 683px; padding-left: 20px; display: flex; align-items: center; gap: 2px; }
.weather svg { margin-top: -4px; }
.weather div { margin-top: -1px; letter-spacing: -.06px; }
.dim { color: #4c5a4a; }
.center { display: flex; align-items: center; }
.search { width: 218px; height: 30px; border-radius: 15px; background: #f0f6ef; border-bottom: 1px solid #b2c4ae; margin: 0 13px; display: flex; align-items: center; padding: 0 10px; }
.search span { flex: 1; margin-left: 11px; font-size: 13px; color: #444; }
.center > svg + svg { margin-left: 20px; }
.edgebox { width: 38px; height: 38px; margin: 0 13px; border-radius: 4px; background: #e9f2e6; display: flex; flex-direction: column; align-items: center; justify-content: space-between; padding-top: 7px; }
.edgebox i { width: 16px; height: 3px; border-radius: 2px; background: #0078d4; }
.app { margin-left: 20px; height: 38px; display: flex; flex-direction: column; justify-content: space-between; align-items: center; padding-top: 7px; }
.app i { width: 6px; height: 3px; border-radius: 2px; background: #7c857a; }
.tray { margin-left: auto; margin-right: 18px; display: flex; align-items: center; }
.tray > svg:nth-child(2) { margin-left: 18px; }
.lang { text-align: center; width: 24px; margin: 0 18px; }
.tray > svg:nth-child(5) { margin-left: 7px; }
.lang, .clock { padding-bottom: 1px; }
.clock { text-align: right; margin-left: 15px; width: 64px; }

.caps { position: absolute; left: 880px; top: 861px; width: 160px; height: 112px; background: #f3f3f3; box-shadow: 20px 20px 8px rgba(0,0,0,.19); display: flex; flex-direction: column; align-items: center; padding-top: 18px; font-size: 14.200px; color: #222; }
.caps span { margin-top: 5px; }
```
